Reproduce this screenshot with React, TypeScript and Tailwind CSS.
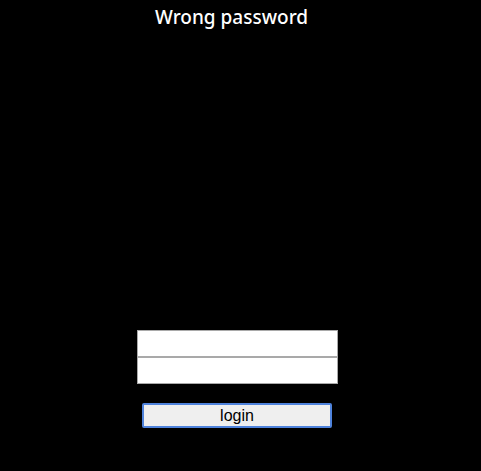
export default function App() {
  return (
    <div className="w-[481px] h-[471px] bg-black overflow-hidden flex flex-col" style={{ fontFamily: "Arial" }}>
      <div className="pl-[155px] pt-[3px] h-[30px] text-white text-[19px] leading-[28px] font-['Noto_Sans',sans-serif] font-medium whitespace-nowrap">
        <span>Wrong password</span>
      </div>
      <div className="h-[300px]" />
      <div className="pl-[137px] flex flex-col">
        <div className="w-[201px] h-[27px] bg-white border border-[#a9a9a9]" />
        <div className="w-[201px] h-[27px] bg-white border border-[#a9a9a9]" />
      </div>
      <div className="h-[19px]" />
      <div className="pl-[142px]">
        <div className="w-[190px] h-[25px] bg-[#efefef] border-2 border-[#4f83dc] rounded-[2px] flex items-center justify-center text-black text-[16px] font-['Liberation_Sans',sans-serif]">
          login
        </div>
      </div>
    </div>
  );
}
